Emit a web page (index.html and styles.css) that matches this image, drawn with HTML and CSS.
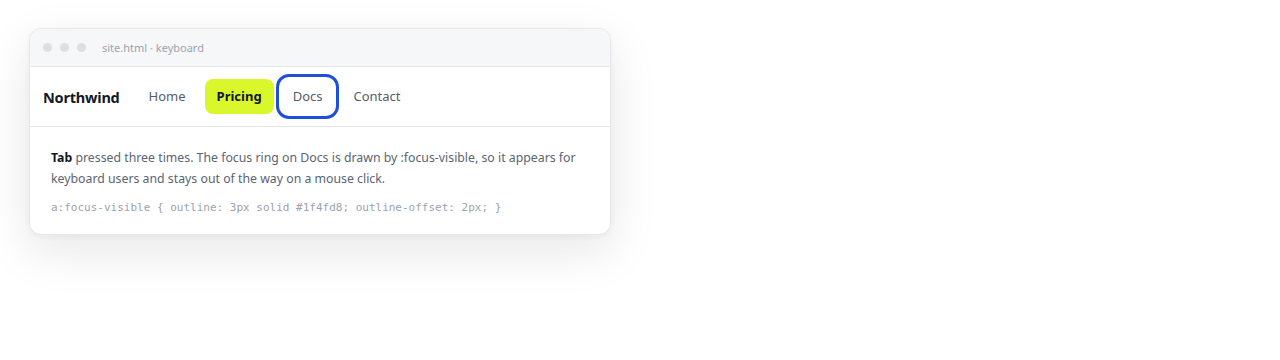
FILE: index.html
```html
<!DOCTYPE html>
<html lang="en">
<head>
<meta charset="utf-8">
<title>Focus visible demo</title>
<link rel="stylesheet" href="styles.css">
</head>
<body>
<div class="window">
  <div class="titlebar">
    <span class="dot"></span><span class="dot"></span><span class="dot"></span>
    <span class="title">site.html · keyboard</span>
  </div>
  <nav class="nav">
    <span class="brand">Northwind</span>
    <a class="link">Home</a>
    <a class="link active">Pricing</a>
    <a class="link focused">Docs</a>
    <a class="link">Contact</a>
  </nav>
  <div class="body">
    <p class="note"><b class="key">Tab</b> pressed three times. The focus ring on Docs is drawn by :focus-visible, so it appears for keyboard users and stays out of the way on a mouse click.</p>
    <code class="code">a:focus-visible { outline: 3px solid #1f4fd8; outline-offset: 2px; }</code>
  </div>
</div>
</body>
</html>
```
FILE: styles.css
```css
html, body { margin: 0; padding: 0; background: #ffffff; }
html { height: 100%; }
body {
  font-family: "Noto Sans", "Open Sans", sans-serif;
  padding: 28px 0 0 29px;
  min-height: 100%;
  box-sizing: border-box;
}
.window {
  width: 580px;
  border: 1px solid #e5e7eb;
  border-radius: 12px;
  background: #fff;
  box-shadow: 0 16px 48px rgba(15, 23, 42, 0.10), 0 2px 6px rgba(15, 23, 42, 0.04);
  overflow: hidden;
}
.titlebar {
  height: 38px;
  background: #f6f7f9;
  border-bottom: 1px solid #e5e7eb;
  display: flex;
  align-items: center;
  padding-left: 13px;
  box-sizing: border-box;
}
.dot {
  width: 9px; height: 9px; border-radius: 50%;
  background: #dddfe3;
  margin-right: 8px;
}
.title {
  margin-left: 8px;
  font-size: 11px;
  color: #9ca3af;
}
.nav {
  height: 59px;
  display: flex;
  align-items: center;
  padding-left: 13px;
  gap: 7px;
  border-bottom: 1px solid #e5e7eb;
}
.brand {
  font-weight: 700;
  font-size: 14.5px;
  color: #111827;
  margin-right: 10px;
  letter-spacing: -0.2px;
}
.link {
  font-size: 13px;
  color: #555d6b;
  padding: 0 12px;
  height: 35px;
  line-height: 35px;
  border-radius: 8px;
}
.link.active {
  background: #d9f72a;
  color: #111827;
  font-weight: 700;
}
.link.focused {
  outline: 3px solid #1f4fd8;
  outline-offset: 2px;
}
.body {
  padding: 20px 21px 18px;
}
.note {
  margin: 0;
  font-size: 12.3px;
  line-height: 21px;
  color: #5b6472;
}
.key { color: #111827; }
.code {
  display: block;
  margin-top: 11px;
  font-family: "DejaVu Sans Mono", monospace;
  font-size: 11px;
  line-height: 16px;
  color: #9ca3af;
}
```
